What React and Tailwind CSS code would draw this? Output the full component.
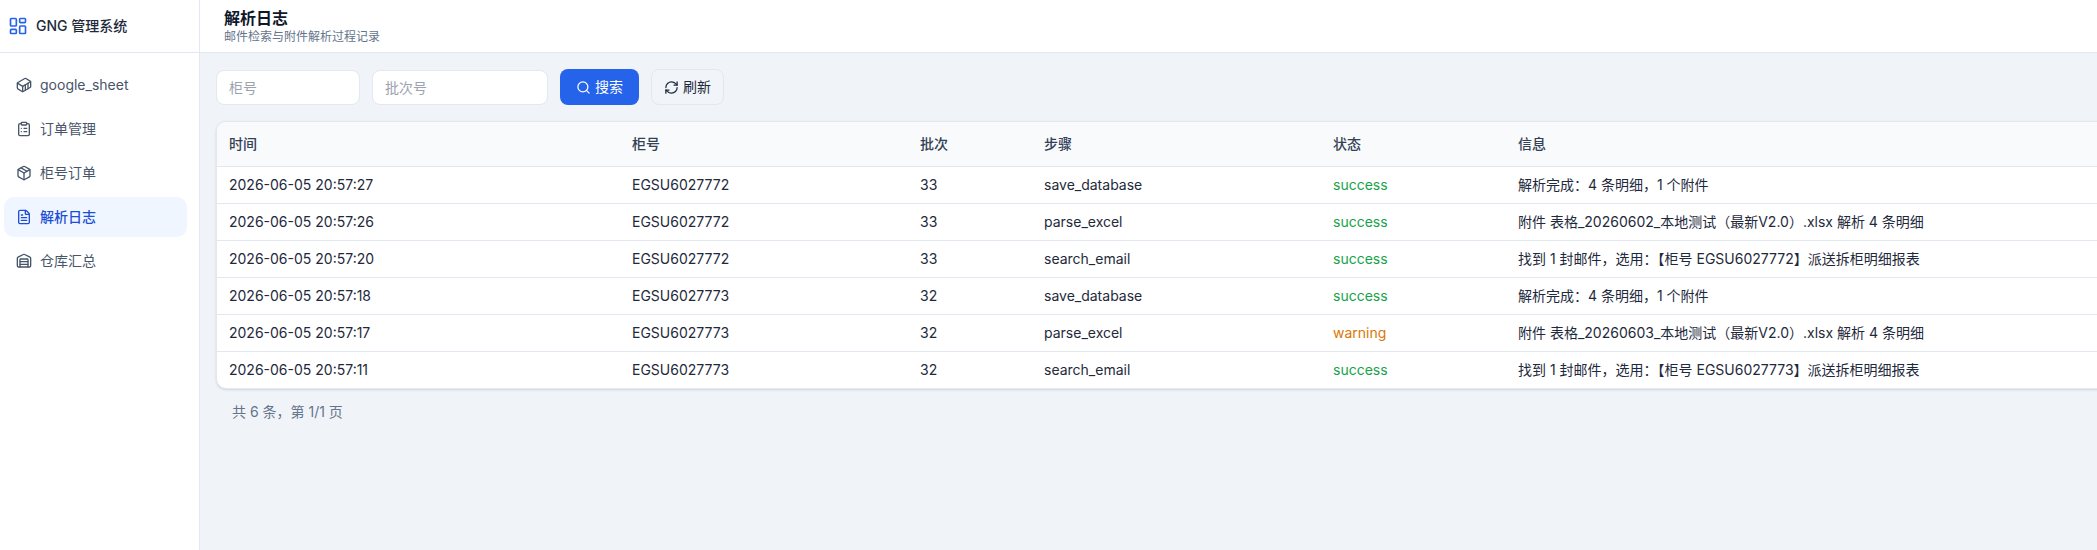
import { LayoutDashboard, Container, ClipboardList, Package, FileText, Warehouse, Search, RefreshCw } from "lucide-react";

const font = "font-['Inter','Noto_Sans_CJK_SC',sans-serif]";
const nav = [
  { label: "google_sheet", Icon: Container },
  { label: "订单管理", Icon: ClipboardList },
  { label: "柜号订单", Icon: Package },
  { label: "解析日志", Icon: FileText, active: true },
  { label: "仓库汇总", Icon: Warehouse },
];
const rows = [
  ["2026-06-05 20:57:27", "EGSU6027772", "33", "save_database", "success", "解析完成：4 条明细，1 个附件"],
  ["2026-06-05 20:57:26", "EGSU6027772", "33", "parse_excel", "success", "附件 表格_20260602_本地测试（最新V2.0）.xlsx 解析 4 条明细"],
  ["2026-06-05 20:57:20", "EGSU6027772", "33", "search_email", "success", "找到 1 封邮件，选用：【柜号 EGSU6027772】派送拆柜明细报表"],
  ["2026-06-05 20:57:18", "EGSU6027773", "32", "save_database", "success", "解析完成：4 条明细，1 个附件"],
  ["2026-06-05 20:57:17", "EGSU6027773", "32", "parse_excel", "warning", "附件 表格_20260603_本地测试（最新V2.0）.xlsx 解析 4 条明细"],
  ["2026-06-05 20:57:11", "EGSU6027773", "32", "search_email", "success", "找到 1 封邮件，选用：【柜号 EGSU6027773】派送拆柜明细报表"],
];
const heads = ["时间", "柜号", "批次", "步骤", "状态", "信息"];
const cols = ["w-[403px]", "w-[288px]", "w-[124px]", "w-[289px]", "w-[185px]", "w-[671px]"];

export default function App() {
  return (
    <div className={`${font} flex h-[550px] w-[2097px] overflow-hidden bg-[#f0f4f9] text-[#1e293b]`}>
      <aside className="flex w-[200px] shrink-0 flex-col border-r border-[#e2e8f0] bg-white">
        <div className="flex h-[53px] items-center gap-2 border-b border-[#e2e8f0] pl-2">
          <LayoutDashboard size={20} strokeWidth={2} className="text-[#2563eb]" />
          <span className="text-sm font-medium text-[#1e293b]">GNG 管理系统</span>
        </div>
        <nav className="flex flex-col gap-1 pl-1 pr-3 pt-3">
          {nav.map(({ label, Icon, active }) => (
            <div key={label} className={`flex h-10 items-center gap-2 rounded-[10px] pl-3 text-sm ${active ? "bg-[#eff6ff] font-medium text-[#1d4ed8]" : "text-[#475569]"}`}>
              <Icon size={16} strokeWidth={2} />
              <span>{label}</span>
            </div>
          ))}
        </nav>
      </aside>
      <main className="flex min-w-0 flex-1 flex-col">
        <header className="flex h-[53px] shrink-0 flex-col justify-center border-b border-[#e2e8f0] bg-white pb-[1px] pl-6 pt-[3px]">
          <h1 className="text-base leading-[20px] font-semibold text-[#0f172a]">解析日志</h1>
          <p className="text-xs leading-[18px] text-[#64748b]">邮件检索与附件解析过程记录</p>
        </header>
        <div className="flex flex-col pl-4 pt-4">
          <div className="flex items-center gap-3">
            <input placeholder="柜号" className="h-[35px] w-[144px] rounded-lg border border-[#e2e8f0] bg-white px-3 text-sm outline-none placeholder:text-[#9ca3af]" />
            <input placeholder="批次号" className="h-[35px] w-[176px] rounded-lg border border-[#e2e8f0] bg-white px-3 text-sm outline-none placeholder:text-[#9ca3af]" />
            <button className="flex h-9 w-[79px] items-center justify-center gap-1 rounded-lg bg-[#2563eb] text-sm text-white">
              <Search size={15} strokeWidth={2} />
              搜索
            </button>
            <button className="flex h-[36px] w-[73px] items-center justify-center gap-1 rounded-lg border border-[#e2e8f0] bg-[#f1f5f9] text-sm text-[#1e293b]">
              <RefreshCw size={15} strokeWidth={2} />
              刷新
            </button>
          </div>
          <div className="mt-[16px] w-[1960px] overflow-hidden rounded-[10px] border border-[#e2e8f0] bg-white shadow-sm">
            <table className="w-full table-fixed border-collapse text-sm">
              <colgroup>
                {cols.map((c, i) => <col key={i} className={c} />)}
              </colgroup>
              <thead>
                <tr className="h-[44px] bg-[#f8fafc]">
                  {heads.map((h) => (
                    <th key={h} className="border-b border-[#e2e8f0] pl-3 text-left font-medium text-[#334155]">{h}</th>
                  ))}
                </tr>
              </thead>
              <tbody>
                {rows.map((r, i) => (
                  <tr key={i} className="h-[37px]">
                    {r.map((c, j) => (
                      <td key={j} className={`pl-3 ${i < rows.length - 1 ? "border-b border-[#e2e8f0]" : ""} ${j === 4 ? (c === "warning" ? "text-[#d97706]" : "text-[#16a34a]") : "text-[#1e293b]"}`}>{c}</td>
                    ))}
                  </tr>
                ))}
              </tbody>
            </table>
          </div>
          <div className="mt-[13px] pl-4 text-sm text-[#64748b]">共 6 条，第 1/1 页</div>
        </div>
      </main>
    </div>
  );
}
